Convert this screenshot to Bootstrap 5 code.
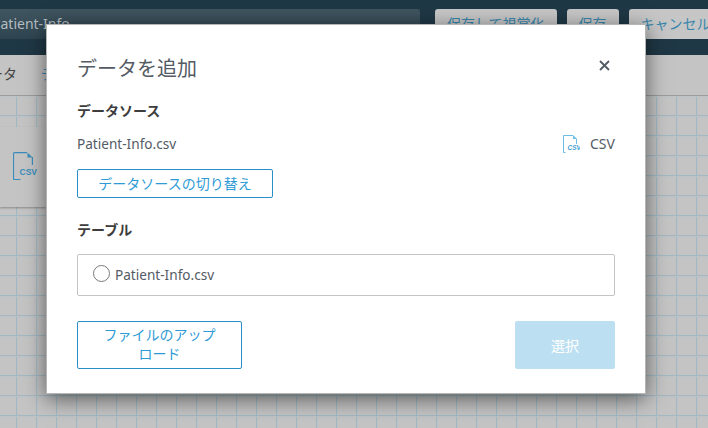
<!DOCTYPE html>
<html lang="ja">
<head>
    <meta charset="UTF-8">
    <meta name="viewport" content="width=device-width, initial-scale=1.0">
    <title>データを追加</title>
    <link href="https://cdn.jsdelivr.net/npm/bootstrap@5.3.0/dist/css/bootstrap.min.css" rel="stylesheet">
    <style>
        html, body {
            height: 100%;
            overflow: hidden;
        }
        body {
            font-family: "Noto Sans", "Noto Sans CJK JP", sans-serif;
            font-size: 14px;
            color: #545b64;
            background-color: #c4c4c4;
        }
        .page {
            height: 428px;
            overflow: hidden;
        }
        .top-bar {
            height: 55px;
            padding-top: 9px;
            background-color: #1f3845;
        }
        .name-box {
            width: 420px;
            height: 30px;
            line-height: 29px;
            font-size: 14px;
            color: #b4bcc1;
            white-space: nowrap;
            overflow: hidden;
            border-radius: 0 3px 3px 0;
            background: linear-gradient(#40555f, #2e4551);
        }
        .name-box span {
            margin-left: -8px;
        }
        .top-btn {
            height: 30px;
            padding: 0 12px;
            line-height: 29px;
            font-size: 14px;
            color: #3a86ad;
            white-space: nowrap;
            border-radius: 3px;
            background-color: #c6c6c6;
        }
        .top-btns {
            margin-left: 15px;
            gap: 10px;
        }
        .sub-bar {
            height: 41px;
            padding-top: 7px;
            line-height: 24px;
            color: #444;
            white-space: nowrap;
            border-bottom: 1px solid #9c9c9c;
        }
        .sub-bar span {
            margin-left: -25px;
        }
        .sub-bar a {
            margin-left: 24px;
            color: #2f86b8;
            text-decoration: none;
        }
        .canvas-area {
            height: 332px;
            padding-top: 31px;
            background-color: #c4c4c4;
            background-image:
                linear-gradient(#a3b8c3 1px, #bdc3c6 1px, #bdc3c6 2px, transparent 2px),
                linear-gradient(90deg, #a3b8c3 1px, #bdc3c6 1px, #bdc3c6 2px, transparent 2px);
            background-size: 20px 20px;
            background-position: 16px 19px;
        }
        .source-card {
            width: 46px;
            height: 80px;
            padding: 25px 0 0 13px;
            background-color: #c4c4c4;
            box-shadow: 0 1px 2px rgba(0, 0, 0, .3);
        }
        .source-card svg {
            display: block;
        }
        .dialog-box {
            position: absolute;
            left: 46px;
            top: 24px;
            width: 600px;
            height: 370px;
            padding: 32px 30px 24px;
            background-color: #fff;
            border: 1px solid #b5b5b5;
            box-shadow: 0 5px 20px rgba(0, 0, 0, .55);
        }
        .dialog-title {
            margin: 0;
            font-size: 20px;
            line-height: 24px;
            font-weight: 400;
            color: #545b64;
        }
        .close-x {
            margin-top: 3px;
            margin-right: 5px;
            line-height: 0;
        }
        .section-head {
            margin: 0;
            font-size: 14px;
            line-height: 20px;
            font-weight: 700;
            color: #3d3d3d;
        }
        .file-name {
            font-size: 13.6px;
            line-height: 20px;
            color: #545b64;
        }
        .type-name {
            gap: 10px;
            font-size: 14px;
            line-height: 20px;
            color: #545b64;
        }
        .type-name span {
            width: 25px;
        }
        .outline-action, .outline-action:hover {
            padding: 0;
            font-size: 14px;
            line-height: 20px;
            color: #2f9bd6;
            border: 1px solid #2b8fc7;
            border-radius: 2px;
            background: #fff;
        }
        .switch-btn, .switch-btn:hover {
            width: 196px;
            height: 29px;
        }
        .upload-btn, .upload-btn:hover {
            width: 165px;
            height: 48px;
            padding: 0 24px 2px;
            line-height: 19px;
        }
        .table-option {
            height: 42px;
            padding-left: 15px;
            border: 1px solid #c4c4c4;
            border-radius: 2px;
        }
        .radio-ring {
            width: 17px;
            height: 17px;
            margin-top: -3px;
            margin-right: 5px;
            border: 1px solid #7a7a7a;
            border-radius: 50%;
        }
        .choose-btn, .choose-btn:disabled {
            width: 100px;
            height: 48px;
            padding: 0;
            font-size: 14px;
            color: #fff;
            border: 0;
            border-radius: 2px;
            background-color: #bddff2;
            opacity: 1;
        }
        .gap-a { margin-top: 20px; }
        .gap-b { margin-top: 13px; }
        .gap-c { margin-top: 15px; }
        .gap-d { margin-top: 22px; }
        .gap-e { margin-top: 14px; }
        .gap-f { margin-top: 25px; }
    </style>
</head>
<body>
    <div class="page">
        <div class="top-bar d-flex">
            <div class="name-box flex-shrink-0"><span>Patient-Info</span></div>
            <div class="top-btns d-flex flex-nowrap flex-shrink-0">
                <div class="top-btn">保存して視覚化</div>
                <div class="top-btn">保存</div>
                <div class="top-btn">キャンセル</div>
            </div>
        </div>
        <div class="sub-bar"><span>データ</span><a href="#">データソース</a></div>
        <div class="canvas-area">
            <div class="source-card">
                <svg width="24" height="28" viewBox="0 0 24 28" fill="none">
                    <path d="M14 .6H1.5a1 1 0 0 0-1 1v25a1 1 0 0 0 1 1h6" stroke="#3a8dba" stroke-width="1.2"/>
                    <path d="M14.5 .5l5 5h-5z" fill="#3a8dba"/>
                    <path d="M19.4 5v8" stroke="#3a8dba" stroke-width="1.2"/>
                    <text x="6.5" y="23" font-family="Liberation Sans, sans-serif" font-size="8.5" font-weight="700" fill="#3a8dba">CSV</text>
                </svg>
            </div>
        </div>
    </div>

    <div class="dialog-box d-flex flex-column" role="dialog">
        <div class="d-flex justify-content-between align-items-start">
            <h5 class="dialog-title">データを追加</h5>
            <div class="close-x">
                <svg width="11" height="11" viewBox="0 0 11 11" fill="none">
                    <path d="M1 1l9 9M10 1l-9 9" stroke="#545b64" stroke-width="1.8"/>
                </svg>
            </div>
        </div>

        <h6 class="section-head gap-a">データソース</h6>
        <div class="d-flex justify-content-between align-items-center gap-b">
            <span class="file-name">Patient-Info.csv</span>
            <span class="d-flex align-items-center type-name">
                <svg width="17" height="18" viewBox="0 0 17 18" fill="none">
                    <path d="M10 .5H.5v17h2M10 .5l3.5 3.5v5" stroke="#6cbce6"/>
                    <path d="M10 .5l3.5 3.5H10z" fill="#6cbce6"/>
                    <text x="4.5" y="15" font-family="Liberation Sans, sans-serif" font-size="6.5" font-style="italic" font-weight="700" fill="#3f9fd4">CSV</text>
                </svg>
                <span>CSV</span>
            </span>
        </div>
        <div class="gap-c">
            <button type="button" class="btn outline-action switch-btn">データソースの切り替え</button>
        </div>

        <h6 class="section-head gap-d">テーブル</h6>
        <div class="table-option d-flex align-items-center gap-e">
            <span class="radio-ring"></span>
            <span class="file-name">Patient-Info.csv</span>
        </div>

        <div class="d-flex justify-content-between gap-f">
            <button type="button" class="btn outline-action upload-btn">ファイルのアップロード</button>
            <button type="button" class="btn choose-btn" disabled>選択</button>
        </div>
    </div>

    <script src="https://cdn.jsdelivr.net/npm/bootstrap@5.3.0/dist/js/bootstrap.bundle.min.js"></script>
</body>
</html>
